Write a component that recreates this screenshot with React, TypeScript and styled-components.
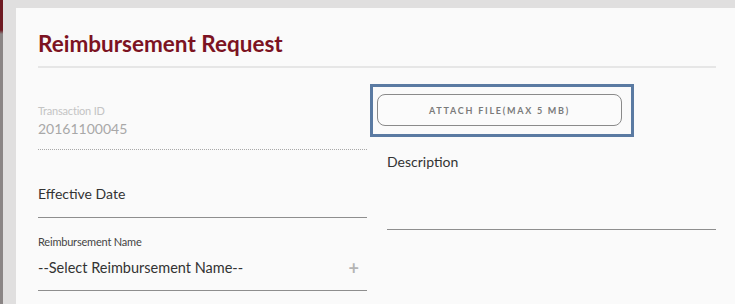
import React from "react";
import styled, { createGlobalStyle } from "styled-components";

const Global = createGlobalStyle`
  html, body { margin: 0; padding: 0; background: #e0dfdf; }
  body { font-family: Lato, "Open Sans", Arial, sans-serif; }
  * { box-sizing: border-box; }
`;

const Page = styled.div`
  display: flex;
  width: 735px;
  height: 304px;
  overflow: hidden;
  background: #e0dfdf;
`;

const EdgeStrip = styled.div`
  width: 3px;
  flex: none;
  background: linear-gradient(to bottom, #6e1a22 0px, #6e1a22 30px, #8a8585 34px, #8a8585 100%);
`;

const Gutter = styled.div`
  width: 13px;
  flex: none;
`;

const Panel = styled.div`
  flex: 1;
  margin-top: 8px;
  background: #fafafa;
  padding: 21px 19px 0 22px;
`;

const Title = styled.h1`
  margin: 0;
  font-size: 22.5px;
  font-weight: 700;
  color: #7c1322;
  line-height: 29px;
  padding-bottom: 8px;
  border-bottom: 2px solid #e6e6e6;
`;

const Columns = styled.div`
  display: grid;
  grid-template-columns: 329px 329px;
  column-gap: 20px;
`;

const Column = styled.div`
  display: flex;
  flex-direction: column;
`;

const SmallLabel = styled.div<{ $muted?: boolean }>`
  font-size: 11px;
  line-height: 14px;
  color: ${(p) => (p.$muted ? "#c4c4c4" : "#444")};
  letter-spacing: -0.2px;
`;

const Value = styled.div<{ $muted?: boolean; $wide?: boolean }>`
  font-size: ${(p) => (p.$wide ? "14.5px" : "14px")};
  line-height: 18px;
  color: ${(p) => (p.$muted ? "#a8a8a8" : "#333")};
`;

const TxnField = styled.div`
  margin-top: 36px;
  padding-bottom: 11px;
  border-bottom: 1px dotted #a8a8a8;
  display: flex;
  flex-direction: column;
  gap: 2px;
`;

const DateField = styled.div`
  margin-top: 35px;
  padding-bottom: 14px;
  border-bottom: 1px solid #8e8e8e;
`;

const SelectField = styled.div`
  margin-top: 17px;
  padding-bottom: 13px;
  border-bottom: 1px solid #8e8e8e;
  display: flex;
  flex-direction: column;
  gap: 10px;
`;

const SelectRow = styled.div`
  display: flex;
  align-items: center;
  justify-content: space-between;
  padding-right: 8px;
`;

const Plus = styled.span`
  color: #b4b4b4;
  font-size: 18px;
  line-height: 16px;
  font-weight: 700;
`;

const FocusFrame = styled.div`
  margin-top: 16px;
  margin-left: -17px;
  width: 264px;
  height: 53px;
  border: 3px solid #5a7aa2;
  padding: 7px 9px 0 4px;
`;

const AttachButton = styled.button`
  width: 245px;
  height: 32px;
  border: 1px solid #8a8a8a;
  border-radius: 8px;
  background: #fbfbfb;
  font-family: Lato, Arial, sans-serif;
  font-weight: 700;
  font-size: 9px;
  letter-spacing: 1.75px;
  color: #7a7a7a;
  padding: 0;
  display: flex;
  align-items: center;
  justify-content: center;
`;

const DescField = styled.div`
  margin-top: 16px;
  height: 77px;
  border-bottom: 1px solid #8e8e8e;
`;

export default function App() {
  return (
    <>
      <Global />
      <Page>
        <EdgeStrip />
        <Gutter />
        <Panel>
          <Title>Reimbursement Request</Title>
          <Columns>
            <Column>
              <TxnField>
                <SmallLabel $muted>Transaction ID</SmallLabel>
                <Value $muted>20161100045</Value>
              </TxnField>
              <DateField>
                <Value>Effective Date</Value>
              </DateField>
              <SelectField>
                <SmallLabel>Reimbursement Name</SmallLabel>
                <SelectRow>
                  <Value $wide>--Select Reimbursement Name--</Value>
                  <Plus>+</Plus>
                </SelectRow>
              </SelectField>
            </Column>
            <Column>
              <FocusFrame>
                <AttachButton>ATTACH FILE(MAX 5 MB)</AttachButton>
              </FocusFrame>
              <DescField>
                <Value>Description</Value>
              </DescField>
            </Column>
          </Columns>
        </Panel>
      </Page>
    </>
  );
}
